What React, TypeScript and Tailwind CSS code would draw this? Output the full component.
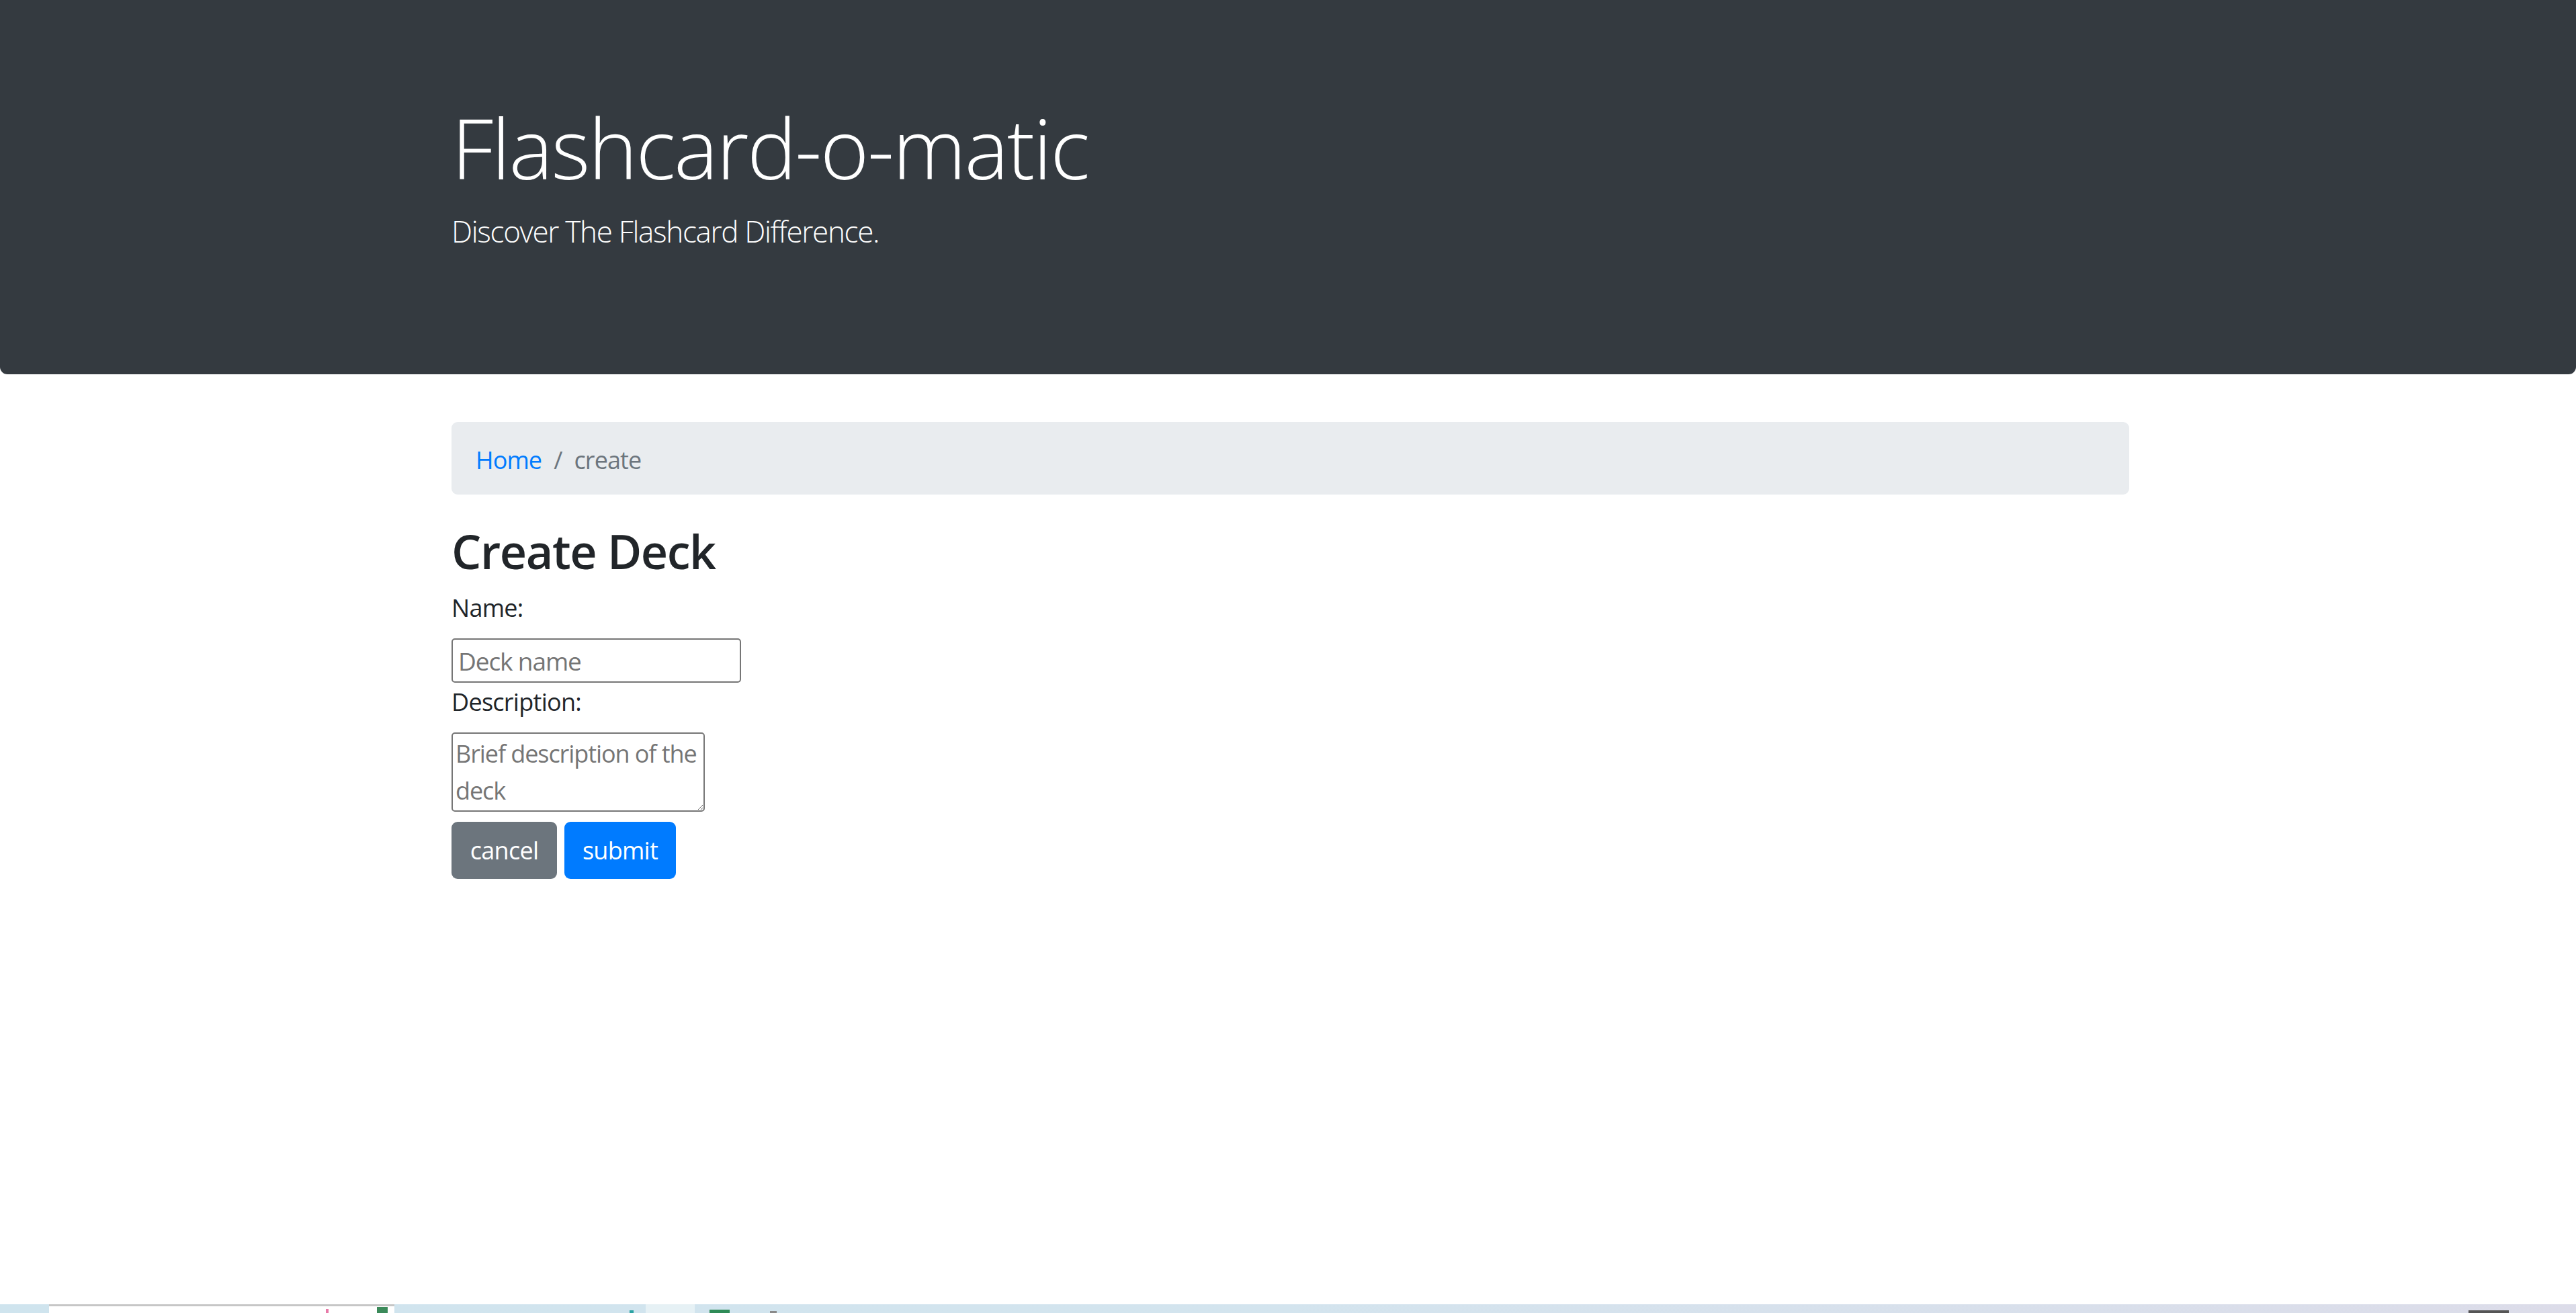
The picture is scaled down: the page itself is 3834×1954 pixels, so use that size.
import React, { useState } from "react";

const FONT = { fontFamily: '"Segoe UI", "Open Sans", "Noto Sans", sans-serif' };

function Jumbotron() {
  return (
    <header className="h-[557px] shrink-0 rounded-b-[11px] bg-[#343a40] text-white">
      <div className="ml-[672px] pt-[145px]">
        <h1 className="text-[124px] font-light leading-[1.2] tracking-[-0.02em]">
          Flashcard-o-matic
        </h1>
        <p className="mt-[17px] text-[44px] font-light leading-[1.5] tracking-[-0.03em]">
          Discover The Flashcard Difference.
        </p>
      </div>
    </header>
  );
}

function Breadcrumb() {
  return (
    <nav className="mt-[71px] flex h-[108px] items-center rounded-[9px] bg-[#e9ecef] px-[36px] pt-[5px] text-[36px] tracking-[-0.025em]">
      <a href="#" className="text-[#007bff]">
        Home
      </a>
      <span className="px-[18px] text-[#6c757d]">/</span>
      <span className="text-[#6c757d]">create</span>
    </nav>
  );
}

function Taskbar() {
  return (
    <div className="mt-auto flex h-[13px] shrink-0 items-end bg-gradient-to-r from-[#cfe4ee] via-[#d3e4ee] to-[#dcdce9]">
      <div className="ml-[73px] flex h-[13px] w-[514px] items-end justify-end gap-[12px] border-t-[3px] border-[#c6c6c6] bg-white pr-[10px]">
        <div className="mr-[60px] h-[6px] w-[4px] bg-[#e879a8]" />
        <div className="h-[9px] w-[16px] bg-[#3b8a5a]" />
      </div>
      <div className="ml-[350px] h-[4px] w-[6px] bg-[#2aa3a3]" />
      <div className="ml-[18px] h-[13px] w-[73px] bg-[#e6f1f5]" />
      <div className="ml-[22px] h-[5px] w-[30px] bg-[#2e8b57]" />
      <div className="ml-[60px] h-[3px] w-[10px] bg-[#8a8a8a]" />
      <div className="ml-auto mr-[100px] h-[4px] w-[60px] bg-[#555]" />
    </div>
  );
}

export default function App() {
  const [name, setName] = useState("");
  const [description, setDescription] = useState("");

  return (
    <div className="flex h-[1954px] flex-col bg-white text-[#212529]" style={FONT}>
      <Jumbotron />

      <main className="ml-[672px] w-[2497px]">
        <Breadcrumb />

        <h2 className="mt-[42px] text-[70px] font-semibold leading-[1.2] tracking-[-0.02em]">
          Create Deck
        </h2>

        <form className="flex flex-col items-start" onSubmit={(e) => e.preventDefault()}>
          <label htmlFor="name" className="mt-[16px] text-[36px] leading-[1.5] tracking-[-0.02em]">
            Name:
          </label>
          <input
            id="name"
            type="text"
            value={name}
            onChange={(e) => setName(e.target.value)}
            placeholder="Deck name"
            className="mt-[18px] h-[66px] w-[431px] rounded-[5px] border-2 border-[#767676] px-[8px] text-[37px] tracking-[-0.03em] placeholder-[#757575] outline-none"
          />
          <label
            htmlFor="description"
            className="mt-[2px] text-[36px] leading-[1.5] tracking-[-0.02em]"
          >
            Description:
          </label>
          <textarea
            id="description"
            value={description}
            onChange={(e) => setDescription(e.target.value)}
            placeholder="Brief description of the deck"
            className="mt-[18px] h-[118px] w-[377px] rounded-[5px] border-2 border-[#767676] px-[4px] py-[2px] text-[36px] leading-[55px] tracking-[-0.03em] placeholder-[#757575] outline-none"
          />
          <div className="mt-[15px] flex gap-[11px]">
            <button
              type="button"
              className="h-[85px] w-[157px] rounded-[9px] bg-[#6c757d] text-[36px] tracking-[-0.02em] text-white"
            >
              cancel
            </button>
            <button
              type="submit"
              className="h-[85px] w-[166px] rounded-[9px] bg-[#007bff] text-[36px] tracking-[-0.02em] text-white"
            >
              submit
            </button>
          </div>
        </form>
      </main>

      <Taskbar />
    </div>
  );
}
